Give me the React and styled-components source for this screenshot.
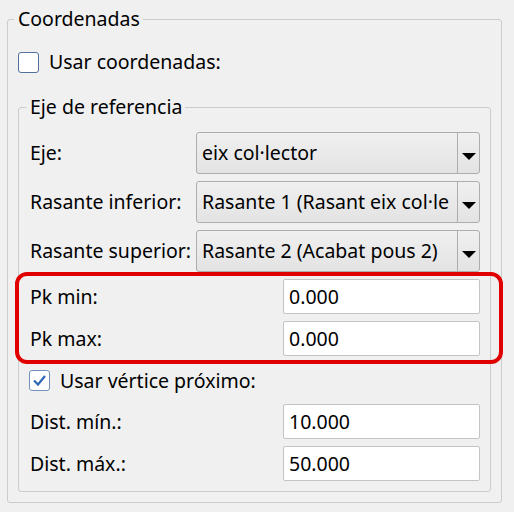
import React from 'react';
import styled, { createGlobalStyle } from 'styled-components';

const GlobalStyle = createGlobalStyle`
  html, body {
    margin: 0;
    background: #f0f0f0;
  }
  body {
    font-family: "Noto Sans", "Open Sans", sans-serif;
    font-size: 19.5px;
    color: #000;
  }
`;

const Group = styled.fieldset`
  margin: 0;
  min-width: 0;
  border: 1px solid #cccccc;
  border-radius: 3px;
`;

const OuterGroup = styled(Group)`
  margin: 7px 12px 0 7px;
  padding: 0 10px 10px 10px;
`;

const InnerGroup = styled(Group)`
  margin-top: 17px;
  padding: 12px 10px 10px 11px;
`;

const Legend = styled.legend`
  margin-left: -4px;
  padding: 0 3px 1px 4px;
  line-height: 24px;
`;

const Stack = styled.div`
  display: flex;
  flex-direction: column;
  gap: ${p => p.$gap || 0}px;
  margin-top: ${p => p.$top || 0}px;
`;

const CheckRow = styled.label`
  display: flex;
  align-items: center;
  gap: 10px;
  height: ${p => p.$h}px;
  margin-top: ${p => p.$top || 0}px;
  margin-left: ${p => p.$left || 0}px;
  line-height: 24px;
`;

const Box = styled.span`
  width: 21px;
  height: 21px;
  box-sizing: border-box;
  border: 1.5px solid ${p => (p.$checked ? '#7391bb' : '#51709c')};
  border-radius: 3px;
  background: #fff;
  display: flex;
  align-items: center;
  justify-content: center;
`;

const FormRow = styled.div`
  display: grid;
  grid-template-columns: ${p => p.$label}px minmax(0, 1fr);
  align-items: center;
  height: ${p => p.$h}px;
`;

const Label = styled.span`
  white-space: nowrap;
  line-height: 24px;
`;

const Combo = styled.div`
  display: flex;
  min-width: 0;
  height: 100%;
  box-sizing: border-box;
  border: 1px solid #adadad;
  border-radius: 3px;
  background: linear-gradient(#f0f0f0, #e3e3e3);
`;

const ComboText = styled.span`
  flex: 1;
  min-width: 0;
  overflow: hidden;
  white-space: nowrap;
  padding-left: 5px;
  line-height: 40px;
`;

const ComboButton = styled.span`
  flex: none;
  width: 21px;
  border-left: 1px solid #adadad;
  display: flex;
  align-items: center;
  justify-content: center;
  padding-top: 6px;
`;

const Field = styled.div`
  height: 100%;
  box-sizing: border-box;
  background: #fff;
  border: 1px solid #c4c4c4;
  border-radius: 2px;
  padding: 1px 0 0 5px;
  line-height: 32px;
`;

const Highlight = styled.div`
  margin: 1px -23px 0 -15px;
  padding: 3px 19px 4px 11px;
  border: 4px solid #e10000;
  border-radius: 12px;
  display: flex;
  flex-direction: column;
  gap: 7px;
`;

const Arrow = () => (
  <svg width="14" height="7" viewBox="0 0 14 7">
    <polygon points="0,0 14,0 7,7" fill="#000" />
  </svg>
);

const Check = ({ checked }) => (
  <Box $checked={checked}>
    {checked && (
      <svg width="17" height="17" viewBox="0 0 17 17">
        <polyline points="3,8.5 7,12.5 14,4" fill="none" stroke="#2f68b4" strokeWidth="2.2" />
      </svg>
    )}
  </Box>
);

const ComboRow = ({ label, value }) => (
  <FormRow $label={166} $h={41}>
    <Label>{label}</Label>
    <Combo>
      <ComboText>{value}</ComboText>
      <ComboButton>
        <Arrow />
      </ComboButton>
    </Combo>
  </FormRow>
);

const FieldRow = ({ label, value }) => (
  <FormRow $label={253} $h={35}>
    <Label>{label}</Label>
    <Field>{value}</Field>
  </FormRow>
);

// the second combo only shows what fits before the drop-down button
const combos = [
  { label: 'Eje:', value: 'eix col·lector' },
  { label: 'Rasante inferior:', value: 'Rasante 1 (Rasant eix col·le' },
  { label: 'Rasante superior:', value: 'Rasante 2 (Acabat pous 2)' },
];

export default function App() {
  return (
    <>
      <GlobalStyle />
      <OuterGroup>
        <Legend>Coordenadas</Legend>
        <CheckRow $h={32} $top={14}>
          <Check />
          Usar coordenadas:
        </CheckRow>
        <InnerGroup>
          <Legend>Eje de referencia</Legend>
          <Stack $gap={8}>
            {combos.map(c => (
              <ComboRow key={c.label} label={c.label} value={c.value} />
            ))}
          </Stack>
          <Highlight>
            <FieldRow label="Pk min:" value="0.000" />
            <FieldRow label="Pk max:" value="0.000" />
          </Highlight>
          <CheckRow $h={33} $left={-1}>
            <Check checked />
            Usar vértice próximo:
          </CheckRow>
          <Stack $gap={7} $top={7}>
            <FieldRow label="Dist. mín.:" value="10.000" />
            <FieldRow label="Dist. máx.:" value="50.000" />
          </Stack>
        </InnerGroup>
      </OuterGroup>
    </>
  );
}
